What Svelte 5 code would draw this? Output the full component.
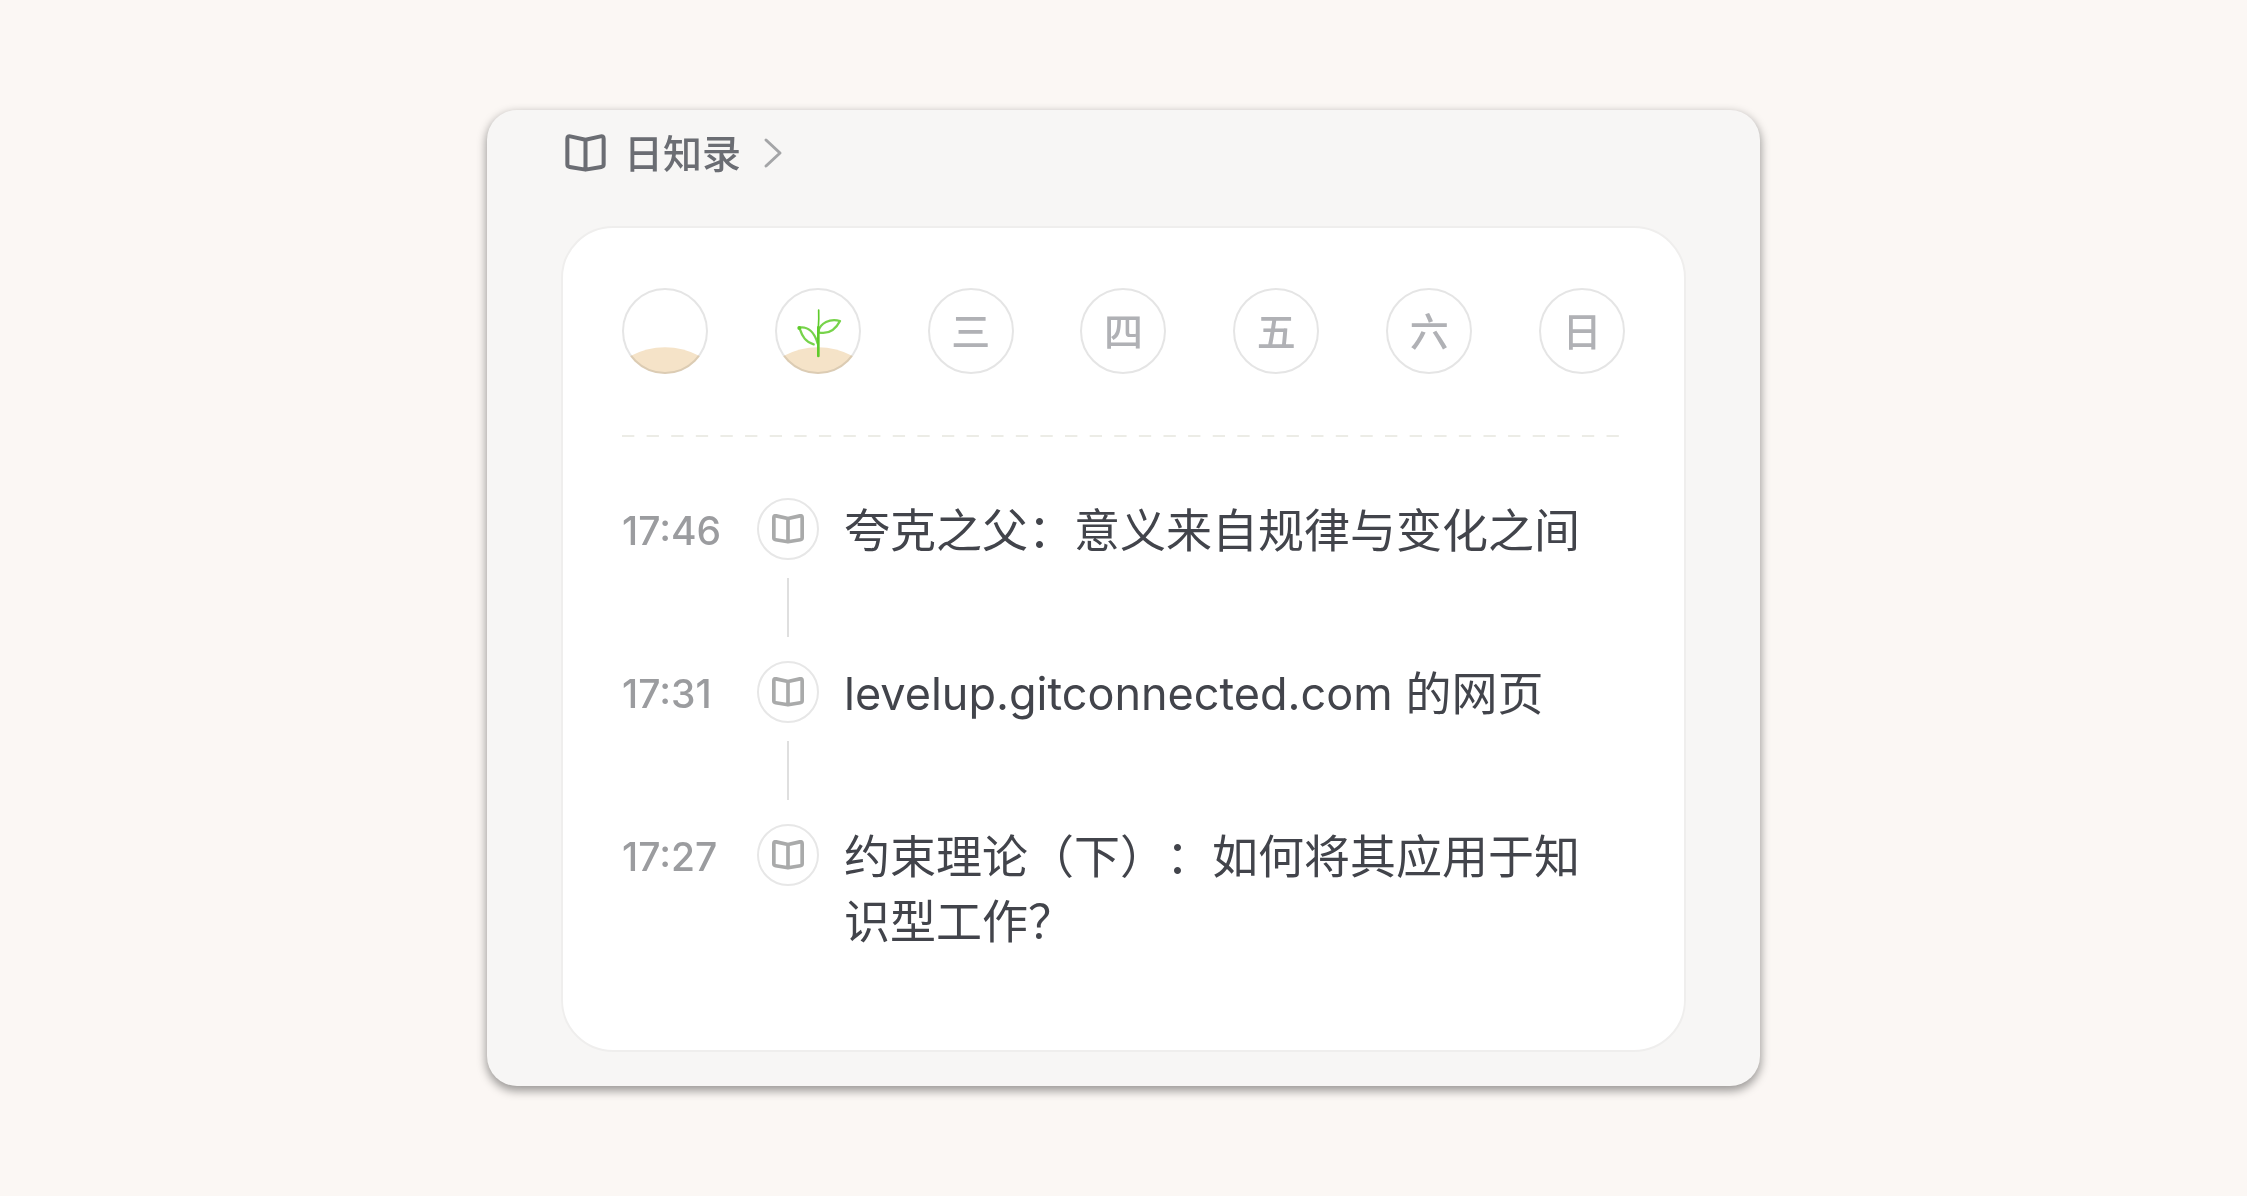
<script>
  const days = [
    { name: '一', state: 'soil' },
    { name: '二', state: 'sprout' },
    { name: '三', state: 'empty' },
    { name: '四', state: 'empty' },
    { name: '五', state: 'empty' },
    { name: '六', state: 'empty' },
    { name: '日', state: 'empty' }
  ];

  const entries = [
    { time: '17:46', title: '夸克之父：意义来自规律与变化之间' },
    { time: '17:31', site: 'levelup.gitconnected.com', title: ' 的网页' },
    { time: '17:27', title: '约束理论（下）：如何将其应用于知识型工作？', end: true }
  ];
</script>

{#snippet book()}
  <svg class="book" viewBox="0 0 122 113" aria-hidden="true">
    <path
      d="M61 17 L16 7 Q7 5 7 14 V91 Q7 97 14 98 L61 106 L108 98 Q115 97 115 91 V14 Q115 5 106 7 Z M61 17 V106"
    />
  </svg>
{/snippet}

<main class="page">
  <section class="panel">
    <header class="head">
      <a class="title" href="#journal">
        {@render book()}
        <span>日知录</span>
        <svg class="chevron" viewBox="0 0 16 28" aria-hidden="true"><path d="M1 1 L15 14 L1 27" /></svg>
      </a>
    </header>

    <div class="card">
      <div class="days">
        {#each days as day}
          <button class="day" type="button" aria-label={'星期' + day.name}>
            {#if day.state === 'empty'}
              <span>{day.name}</span>
            {:else}
              <svg class="plot" viewBox="0 0 258 258" aria-hidden="true">
                <defs>
                  <clipPath id={'plot-' + day.state}><circle cx="129" cy="129" r="129" /></clipPath>
                </defs>
                <g clip-path="url(#plot-{day.state})">
                  <path class="soil" d="M20 206 Q75 178 129 178 Q183 178 238 206 V258 H20 Z" />
                </g>
                {#if day.state === 'sprout'}
                  <g class="sprout">
                    <path class="tip" d="M131 66 Q132 92 130 120" />
                    <path class="stem" d="M130 118 V204" />
                    <path class="leaf" d="M130 130 C136 106 164 90 195 99 C182 124 160 140 130 133" />
                    <path class="leaf" d="M72 119 C98 114 118 132 128 166 M74 122 C82 146 92 162 116 169" />
                    <circle cx="73" cy="120" r="6" />
                  </g>
                {/if}
              </svg>
            {/if}
          </button>
        {/each}
      </div>

      <svg class="divider" aria-hidden="true">
        <line x1="0" y1="1" x2="100%" y2="1" pathLength="815" />
      </svg>

      <ol class="entries">
        {#each entries as entry}
          <li class="entry">
            <time>{entry.time}</time>
            <div class="rail">
              <span class="badge">{@render book()}</span>
              {#if !entry.end}<span class="link"></span>{/if}
            </div>
            <a class="text" href="#entry">{#if entry.site}<span class="site">{entry.site}</span>{/if}{entry.title}</a>
          </li>
        {/each}
      </ol>
    </div>
  </section>
</main>

<style>
  :global(body) {
    background: #fbf7f4;
  }

  .page {
    box-sizing: border-box;
    min-height: 100vh;
    display: flex;
    align-items: center;
    justify-content: center;
    padding: 40px;
    font-family: Inter, 'Noto Sans CJK SC', sans-serif;
  }

  .panel {
    box-sizing: border-box;
    width: 100%;
    max-width: 1273px;
    padding: 15px 74px 34px;
    border-radius: 30px;
    background: #f7f6f5;
    box-shadow: 0 4px 10px 1px rgba(0, 0, 0, 0.38);
  }

  .head {
    display: flex;
    margin-bottom: 45px;
  }

  .title {
    display: flex;
    align-items: center;
    height: 56px;
    padding-left: 4px;
    color: #6b6d73;
    font-size: 39px;
    font-weight: 500;
    text-decoration: none;
  }

  .title span {
    padding-bottom: 4px;
  }

  .title .book {
    width: 41px;
    margin-right: 18px;
  }

  .book {
    display: block;
    fill: none;
    stroke: currentColor;
    stroke-width: 12;
    stroke-linejoin: round;
  }

  .chevron {
    width: 16px;
    height: 28px;
    margin-left: 24px;
    fill: none;
    stroke: #a4a5a7;
    stroke-width: 3;
    stroke-linecap: round;
    stroke-linejoin: round;
    overflow: visible;
  }

  .card {
    padding: 60px 59px 96px;
    border: 2px solid #efeeed;
    border-radius: 52px;
    background: #fff;
  }

  .days {
    display: flex;
    justify-content: space-between;
  }

  .day {
    display: grid;
    place-items: center;
    box-sizing: border-box;
    width: 86px;
    height: 86px;
    padding: 0;
    border: 2px solid #e5e5e5;
    border-radius: 50%;
    background: none;
    color: #b0b1b5;
    font-family: inherit;
    font-size: 39px;
    font-weight: 500;
    line-height: 56px;
  }

  .day span {
    padding-top: 2px;
  }

  .plot {
    display: block;
    width: 86px;
    height: 86px;
    margin: -2px;
    mix-blend-mode: multiply;
  }

  .soil {
    fill: #f5e3c8;
  }

  .sprout {
    fill: none;
    stroke: #5fcb2c;
    stroke-linecap: round;
    stroke-linejoin: round;
  }

  .sprout circle {
    fill: #5fcb2c;
    stroke: none;
  }

  .tip {
    stroke-width: 5;
  }

  .stem {
    stroke-width: 8;
  }

  .leaf {
    stroke-width: 7;
    stroke-opacity: 0.85;
  }

  .divider {
    display: block;
    width: 100%;
    height: 2px;
    margin: 61px 0;
    stroke: #ecece6;
    stroke-width: 2;
    stroke-dasharray: 10 10;
  }

  .entries {
    margin: 0;
    padding: 0;
    list-style: none;
  }

  .entry {
    display: grid;
    grid-template-columns: 135px 62px 1fr;
  }

  time {
    color: #9b9c9f;
    font-size: 39px;
    font-weight: 500;
    line-height: 65px;
  }

  .badge {
    display: grid;
    place-items: center;
    box-sizing: border-box;
    width: 62px;
    height: 62px;
    border: 2px solid #e7e7e7;
    border-radius: 50%;
    color: #a9aaaa;
  }

  .badge .book {
    width: 32px;
    stroke-width: 14;
  }

  .link {
    display: block;
    width: 2px;
    height: 59px;
    margin: 18px auto 24px;
    background: #dfdfdf;
  }

  .text {
    padding: 0 20px 0 25px;
    color: #42444b;
    font-size: 46px;
    line-height: 65px;
    text-decoration: none;
    text-spacing-trim: space-all;
  }

  .site {
    font-size: 45px;
  }
</style>
